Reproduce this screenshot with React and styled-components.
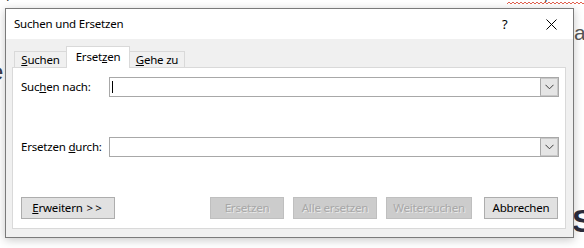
import React from "react";
import styled, { createGlobalStyle } from "styled-components";

const Global = createGlobalStyle`
  html, body { margin: 0; padding: 0; background: #ffffff; }
  body { font-family: "Noto Sans", "Open Sans", Arial, sans-serif; }
  * { box-sizing: border-box; }
`;

const Page = styled.div`
  position: relative;
  width: 584px;
  height: 248px;
  overflow: hidden;
  background: #ffffff;
`;

const Frag = styled.span`
  position: absolute;
  left: ${(p) => p.$x}px;
  top: ${(p) => p.$y}px;
  font-family: "Liberation Sans", Arial, sans-serif;
  font-size: ${(p) => p.$size}px;
  font-weight: ${(p) => (p.$bold ? 700 : 400)};
  color: ${(p) => p.$color};
  line-height: 1;
  white-space: nowrap;
`;

const Squiggle = styled.svg`
  position: absolute;
  left: 507px;
  top: 1px;
`;

const Dialog = styled.div`
  position: absolute;
  left: 5px;
  top: 8px;
  width: 569px;
  height: 230px;
  border: 1px solid #7a7a7a;
  background: #f0f0f0;
  box-shadow: 0 2px 9px rgba(0, 0, 0, 0.22);
  display: flex;
  flex-direction: column;
  font-family: "Noto Sans", "Open Sans", Arial, sans-serif;
  font-size: 11.5px;
  letter-spacing: -0.2px;
  color: #000;
`;

const TitleBar = styled.div`
  height: 30px;
  background: #ffffff;
  display: flex;
  align-items: center;
  padding-left: 8px;
  padding-right: 16px;
`;

const Title = styled.div`
  flex: 1;
  font-size: 11.5px;
  padding-bottom: 1px;
`;

const Help = styled.div`
  width: 8px;
  font-size: 13px;
  margin-right: 36px;
  padding-bottom: 1px;
`;

const Body = styled.div`
  flex: 1;
  padding: 7px 7px 8px 6px;
  display: flex;
  flex-direction: column;
`;

const TabStrip = styled.div`
  display: flex;
  align-items: flex-end;
  padding-left: 2px;
  height: 21px;
`;

const Tab = styled.div`
  width: ${(p) => p.$w}px;
  height: ${(p) => (p.$active ? 22 : 16)}px;
  margin-left: -1px;
  margin-bottom: ${(p) => (p.$active ? -1 : 0)}px;
  border: 1px solid #d9d9d9;
  border-bottom: none;
  background: ${(p) => (p.$active ? "#ffffff" : "#f0f0f0")};
  position: relative;
  z-index: ${(p) => (p.$active ? 2 : 1)};
  display: flex;
  justify-content: center;
  align-items: ${(p) => (p.$active ? "flex-start" : "center")};
  padding-top: ${(p) => (p.$active ? 2 : 0)}px;
  line-height: 15px;
  &:first-child { margin-left: 0; }
`;

const Panel = styled.div`
  flex: 1;
  background: #ffffff;
  border: 1px solid #d9d9d9;
  padding: 9px 6px 8px 8px;
  display: flex;
  flex-direction: column;
  gap: 40px;
  position: relative;
  z-index: 1;
`;

const Row = styled.div`
  display: flex;
  align-items: center;
  height: 20px;
`;

const Label = styled.div`
  width: 88px;
  padding-bottom: 1px;
`;

const Combo = styled.div`
  flex: 1;
  height: 20px;
  border: 1px solid #a8a8a8;
  display: flex;
  align-items: stretch;
  position: relative;
  background: #fff;
`;

const Caret = styled.div`
  position: absolute;
  left: 2px;
  top: 3px;
  width: 1px;
  height: 12px;
  background: #000;
`;

const Field = styled.div`
  flex: 1;
`;

const DropButton = styled.div`
  width: 18px;
  border-left: 1px solid #a8a8a8;
  border-right: 1px solid #c8c8c8;
  border-top: 1px solid #c8c8c8;
  border-bottom: 1px solid #c8c8c8;
  background: #e5e5e5;
  display: flex;
  align-items: center;
  justify-content: center;
`;

const Buttons = styled.div`
  display: flex;
  align-items: center;
  height: 22px;
  padding-right: 1px;
`;

const Spacer = styled.div`
  flex: 1;
`;

const Button = styled.div`
  width: ${(p) => p.$w}px;
  height: 22px;
  margin-left: ${(p) => p.$ml || 0}px;
  border: 1px solid ${(p) => (p.$disabled ? "#bfbfbf" : "#adadad")};
  background: ${(p) => (p.$disabled ? "#cccccc" : "#e1e1e1")};
  color: ${(p) => (p.$disabled ? "#a8a8a8" : "#000")};
  text-shadow: ${(p) => (p.$disabled ? "1px 1px 0 #e8e8e8" : "none")};
  display: flex;
  align-items: center;
  justify-content: center;
  padding-bottom: 1px;
`;

const Arrows = styled.span`
  letter-spacing: 2px;
  margin-left: 4px;
`;

const Chevron = () => (
  <svg width="9" height="6" viewBox="0 0 9 6">
    <path d="M0.5 0.8 L4.5 4.8 L8.5 0.8" fill="none" stroke="#3c3c3c" strokeWidth="1" />
  </svg>
);

const CloseIcon = () => (
  <svg width="11" height="11" viewBox="0 0 11 11">
    <path d="M0.5 0.5 L10.5 10.5 M10.5 0.5 L0.5 10.5" stroke="#000" strokeWidth="1" fill="none" />
  </svg>
);

export default function App() {
  return (
    <>
      <Global />
      <Page>
        <Frag $x={7} $y={-12} $size={16} $color="#333">/</Frag>
        <Frag $x={-4} $y={26} $size={12} $color="#333" $bold>I</Frag>
        <Frag $x={-10} $y={60} $size={24} $color="#3a3a48">e</Frag>
        <Frag $x={-4} $y={198} $size={12} $color="#333" $bold>-</Frag>
        <Frag $x={574} $y={22} $size={21} $color="#555">al</Frag>
        <Frag $x={572} $y={205} $size={32} $color="#2c2c3c" $bold>S</Frag>
        <Frag $x={545} $y={-10} $size={14} $color="#333">/</Frag>
        <Squiggle width="80" height="5" viewBox="0 0 80 5">
          <path
            d="M0 3 l2 -2 l2 2 l2 -2 l2 2 l2 -2 l2 2 l2 -2 l2 2 l2 -2 l2 2 l2 -2 l2 2 l2 -2 l2 2 l2 -2 l2 2 l2 -2 l2 2 l2 -2 l2 2 l2 -2 l2 2 l2 -2 l2 2 l2 -2 l2 2 l2 -2 l2 2 l2 -2 l2 2 l2 -2 l2 2 l2 -2 l2 2 l2 -2 l2 2 l2 -2 l2 2 l2 -2 l2 2"
            fill="none"
            stroke="#e0503c"
            strokeWidth="0.9"
          />
        </Squiggle>
        <Dialog>
          <TitleBar>
            <Title>Suchen und Ersetzen</Title>
            <Help>?</Help>
            <CloseIcon />
          </TitleBar>
          <Body>
            <TabStrip>
              <Tab $w={53}>
                <span><u>S</u>uchen</span>
              </Tab>
              <Tab $w={64} $active>
                <span>Erset<u>z</u>en</span>
              </Tab>
              <Tab $w={56}>
                <span><u>G</u>ehe zu</span>
              </Tab>
            </TabStrip>
            <Panel>
              <Row>
                <Label>Suc<u>h</u>en nach:</Label>
                <Combo>
                  <Caret />
                  <Field />
                  <DropButton><Chevron /></DropButton>
                </Combo>
              </Row>
              <Row>
                <Label>Ersetzen <u>d</u>urch:</Label>
                <Combo>
                  <Field />
                  <DropButton><Chevron /></DropButton>
                </Combo>
              </Row>
              <Buttons>
                <Button $w={94}>
                  <span><u>E</u>rweitern<Arrows>&gt;&gt;</Arrows></span>
                </Button>
                <Spacer />
                <Button $w={74} $disabled>Ersetzen</Button>
                <Button $w={84} $ml={9} $disabled>Alle ersetzen</Button>
                <Button $w={86} $ml={9} $disabled>Weitersuchen</Button>
                <Button $w={74} $ml={12}>Abbrechen</Button>
              </Buttons>
            </Panel>
          </Body>
        </Dialog>
      </Page>
    </>
  );
}
